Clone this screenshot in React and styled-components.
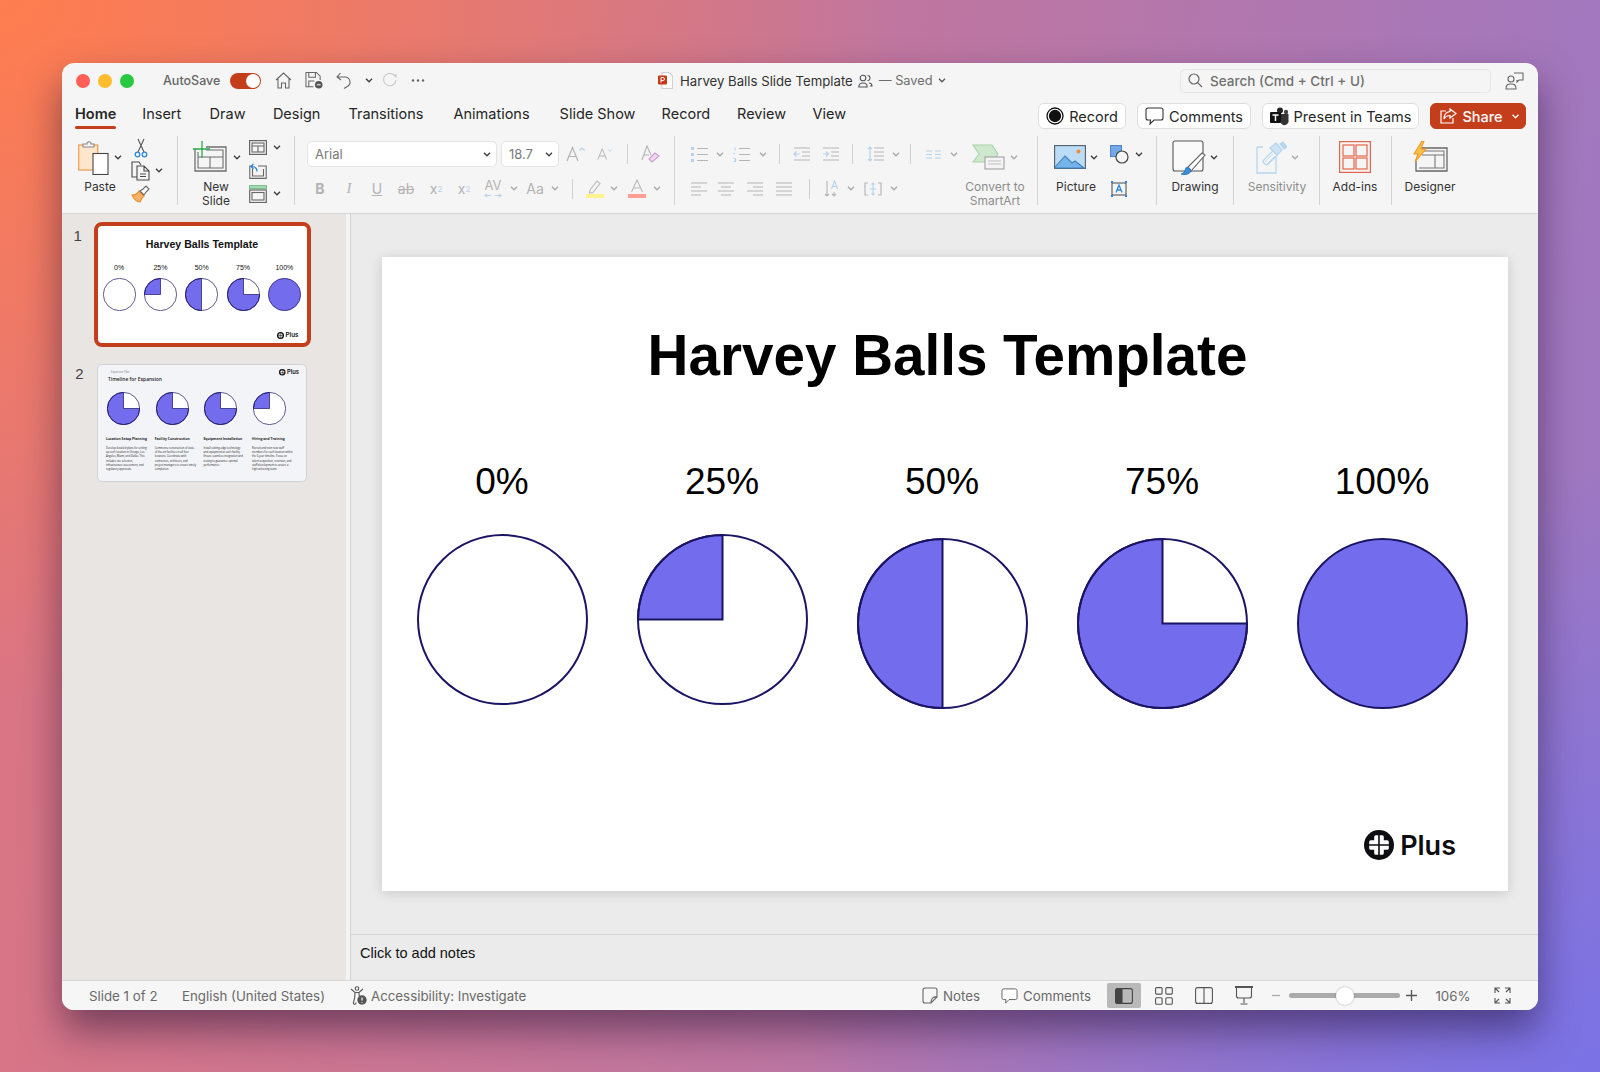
import React from 'react'
import styled, { createGlobalStyle } from 'styled-components'

const GlobalStyle = createGlobalStyle`
  html, body { margin: 0; padding: 0; }
  body { font-family: Inter, "Liberation Sans", sans-serif; color: #262626; }
`

const ORANGE = '#c43e1c'
const DISABLED = '#b3b3b3'
const TINT = '#b5d3ee'
const INK = '#4a4a4a'

const Page = styled.div`
  width: 1600px;
  height: 1072px;
  padding: 63px 62px;
  box-sizing: border-box;
  overflow: hidden;
  background:
    radial-gradient(ellipse 900px 700px at 0% 0%, #ff7d4f 0%, rgba(255, 125, 79, 0) 100%),
    radial-gradient(ellipse 800px 600px at 100% 100%, #7a72e6 0%, rgba(122, 114, 230, 0) 100%),
    linear-gradient(100deg, #de7580 0%, #c0769f 50%, #9a78c6 100%);
`
const Window = styled.div`
  width: 1476px;
  height: 947px;
  display: flex;
  flex-direction: column;
  background: #f5f5f5;
  border-radius: 12px;
  overflow: hidden;
  box-shadow: 0 20px 38px rgba(25, 10, 45, 0.5);
`
const TitleBar = styled.div`
  height: 35px;
  flex: none;
  display: flex;
  align-items: center;
  font-size: 13px;
`
const TitleLeft = styled.div`
  width: 596px;
  padding-left: 14px;
  box-sizing: border-box;
  display: flex;
  align-items: center;
`
const Light = styled.span`
  width: 14px;
  height: 14px;
  border-radius: 50%;
  margin-right: 8px;
  background: ${p => p.$c};
`
const AutoSave = styled.span`
  width: 67px;
  margin-left: 21px;
  font-size: 12.5px;
  font-weight: 500;
  color: #666;
`
const Toggle = styled.span`
  width: 31px;
  height: 16px;
  border-radius: 8px;
  background: ${ORANGE};
  position: relative;
  &::after {
    content: '';
    position: absolute;
    right: 1px;
    top: 1px;
    width: 14px;
    height: 14px;
    border-radius: 50%;
    background: #fff;
  }
`
const Cell = styled.span`
  width: ${p => p.$w}px;
  flex: none;
  display: flex;
  flex-direction: ${p => p.$col ? 'column' : 'row'};
  gap: ${p => p.$col ? 1 : 0}px;
  align-items: center;
  justify-content: center;
  color: ${p => p.$c || 'inherit'};
  font-family: ${p => p.$serif ? '"Liberation Serif", serif' : 'inherit'};
  font-style: ${p => p.$italic ? 'italic' : 'normal'};
  font-weight: ${p => p.$bold ? 700 : 400};
  font-size: ${p => p.$fs || 13}px;
  text-decoration: ${p => p.$deco || 'none'};
  white-space: nowrap;
  line-height: 1;
`
const DocTitle = styled.div`
  width: 522px;
  display: flex;
  align-items: center;
  font-size: 13.2px;
  color: #333;
  & > svg:first-child { margin-right: 7px; }
`
const Saved = styled.span`
  color: #6e6e6e;
  font-size: 12.8px;
  margin-right: 4px;
`
const SearchBox = styled.div`
  width: 311px;
  height: 24px;
  box-sizing: border-box;
  display: flex;
  align-items: center;
  gap: 7px;
  padding-left: 7px;
  border: 1px solid #e6e6e6;
  border-radius: 5px;
  color: #6f6f6f;
  font-weight: 500;
  font-size: 13.5px;
`
const TabsRow = styled.div`
  height: 38px;
  flex: none;
  display: flex;
  padding: 2px 12px 0 13px;
  box-sizing: border-box;
  justify-content: space-between;
`
const Tabs = styled.div`
  display: flex;
`
const TabSlot = styled.div`
  width: ${p => p.$w}px;
`
const Tab = styled.div`
  display: inline-block;
  height: 29px;
  line-height: 28px;
  font-size: 14.5px;
  font-weight: ${p => p.$on ? 600 : 400};
  color: #262626;
  position: relative;
  &::after {
    content: '';
    display: ${p => p.$on ? 'block' : 'none'};
    position: absolute;
    left: 0;
    right: 0;
    bottom: 0;
    height: 3px;
    border-radius: 2px;
    background: ${ORANGE};
  }
`
const Actions = styled.div`
  display: flex;
  gap: 11px;
  padding-top: 3px;
`
const ActionBtn = styled.button`
  height: 26px;
  width: ${p => p.$w}px;
  box-sizing: border-box;
  padding: 0 0 0 ${p => p.$primary ? 8 : 0}px;
  display: flex;
  align-items: center;
  justify-content: center;
  gap: 5px;
  font: 400 14.5px Inter, sans-serif;
  color: ${p => p.$primary ? '#fff' : '#262626'};
  font-weight: ${p => p.$primary ? 500 : 400};
  background: ${p => p.$primary ? ORANGE : '#fff'};
  border: 1px solid ${p => p.$primary ? ORANGE : '#dedede'};
  border-radius: 6px;
`
const Ribbon = styled.div`
  height: 78px;
  flex: none;
  display: flex;
  box-sizing: border-box;
  border-bottom: 1px solid #d6d6d6;
  font-size: 12px;
`
const Group = styled.div`
  width: ${p => p.$w}px;
  height: 69px;
  flex: none;
  box-sizing: border-box;
  display: flex;
  padding-left: ${p => p.$pl || 0}px;
  border-right: ${p => p.$last ? 'none' : '1px solid #d2d2d2'};
`
const BigTool = styled.div`
  width: ${p => p.$w}px;
  flex: none;
  display: flex;
  flex-direction: column;
  align-items: center;
  color: ${p => p.$off ? '#8d8d8d' : '#333'};
`
const BigIcon = styled.div`
  height: 44px;
  flex: none;
  padding-bottom: 2px;
  box-sizing: border-box;
  display: flex;
  align-items: center;
  gap: ${p => p.$gap ?? 4}px;
`
const BigLabel = styled.div`
  flex: none;
  text-align: center;
  line-height: 14px;
  white-space: nowrap;
`
const SmallCol = styled.div`
  display: flex;
  flex-direction: column;
  width: ${p => p.$w}px;
  flex: none;
`
const SmallRow = styled.div`
  height: 24.5px;
  display: flex;
  align-items: center;
  gap: ${p => p.$gap ?? 5}px;
  padding-left: ${p => p.$pl || 0}px;
`
const TwoRows = styled.div`
  display: flex;
  flex-direction: column;
`
const ToolRow = styled.div`
  height: ${p => p.$h}px;
  display: flex;
  align-items: center;
`
const Combo = styled.div`
  width: ${p => p.$w}px;
  height: 26px;
  margin-right: ${p => p.$mr || 0}px;
  box-sizing: border-box;
  display: flex;
  align-items: center;
  justify-content: space-between;
  padding: 0 5px 0 7px;
  background: #fff;
  border: 1px solid #e4e4e4;
  border-radius: 5px;
  font-size: 13px;
  color: #7a7a7a;
`
const Rule = styled.span`
  width: 1px;
  height: ${p => p.$h || 20}px;
  background: #cfcfcf;
`
const Body = styled.div`
  flex: 1;
  min-height: 0;
  display: flex;
`
const Sidebar = styled.div`
  width: 284px;
  flex: none;
  box-sizing: border-box;
  padding-top: 8px;
  background: #e8e5e3;
`
const SlideEntry = styled.div`
  display: flex;
  margin-bottom: 17px;
`
const SlideNo = styled.div`
  width: ${p => p.$w}px;
  flex: none;
  text-align: center;
  padding-top: ${p => p.$pt}px;
  font: 15px "Liberation Sans", sans-serif;
  color: #444;
`
const ThumbOne = styled.div`
  width: 217px;
  height: 125px;
  box-sizing: border-box;
  border: 4px solid ${ORANGE};
  border-radius: 8px;
  background: #fff;
  display: flex;
  flex-direction: column;
  font-family: "Liberation Sans", sans-serif;
  color: #111;
`
const MiniTitle = styled.div`
  text-align: center;
  font-weight: 700;
  font-size: 10.6px;
  line-height: 12px;
  margin-top: 12px;
`
const MiniBalls = styled.div`
  display: flex;
  margin-top: 14px;
  padding-left: 1px;
`
const MiniCol = styled.div`
  width: 41.3px;
  display: flex;
  flex-direction: column;
  align-items: center;
  gap: 6px;
  font-size: 7px;
  line-height: 8px;
`
const MiniLogoSlot = styled.div`
  margin: auto 8px 4px auto;
`
const ThumbTwo = styled.div`
  width: 210px;
  height: 118px;
  box-sizing: border-box;
  padding: 4px 7px 0 3px;
  background: #f3f4f8;
  border: 1px solid #d2d2d4;
  border-radius: 5px;
  font-family: "Open Sans", sans-serif;
  color: #1b1b1b;
`
const ThumbHead = styled.div`
  display: flex;
  justify-content: space-between;
  align-items: flex-start;
  padding-left: 7px;
  height: 23px;
`
const Eyebrow = styled.div`
  font-size: 2.6px;
  line-height: 5px;
  margin: 1px 0 0 3px;
  color: #777;
`
const ThumbHeading = styled.div`
  font-size: 4.9px;
  line-height: 7px;
  font-weight: 600;
  margin-top: 1px;
`
const ThumbCols = styled.div`
  display: flex;
`
const ThumbCol = styled.div`
  width: 48.7px;
  flex: none;
  box-sizing: border-box;
  padding: 0 2px 0 5px;
  & > svg { display: block; margin: 0 0 11px 1px; }
`
const ThumbSub = styled.div`
  font-size: 3.4px;
  line-height: 5px;
  font-weight: 700;
  white-space: nowrap;
  margin-bottom: 5px;
`
const ThumbCopy = styled.div`
  font-size: 2.6px;
  line-height: 4.2px;
  font-weight: 500;
  color: #222;
`
const Splitter = styled.div`
  width: 4px;
  flex: none;
  background: #f4f4f4;
  border-right: 1px solid #d2d2d2;
`
const MainCol = styled.div`
  flex: 1;
  min-width: 0;
  display: flex;
  flex-direction: column;
  background: #ebebeb;
`
const Stage = styled.div`
  height: 721px;
  flex: none;
  box-sizing: border-box;
  padding: 43px 0 0 31px;
  border-bottom: 1px solid #d6d6d6;
`
const Slide = styled.div`
  width: 1126px;
  height: 634px;
  display: flex;
  flex-direction: column;
  background: #fff;
  box-shadow: 0 2px 12px rgba(0, 0, 0, 0.14);
  font-family: "Liberation Sans", sans-serif;
  color: #000;
`
const SlideTitle = styled.h1`
  margin: 61px 0 0;
  padding-left: 5px;
  height: 75px;
  line-height: 75px;
  text-align: center;
  font-size: 56.6px;
  font-weight: 700;
`
const Balls = styled.div`
  display: flex;
  margin-top: 67px;
  padding-left: 10px;
`
const BallCol = styled.div`
  width: 220px;
  display: flex;
  flex-direction: column;
  align-items: center;
`
const BallLabel = styled.div`
  height: 44px;
  line-height: 44px;
  font-size: 37px;
`
const BallWrap = styled.div`
  margin-top: ${p => p.$top}px;
  line-height: 0;
`
const LogoSlot = styled.div`
  margin: auto 52px 31px auto;
`
const LogoWrap = styled.div`
  display: flex;
  align-items: center;
  gap: ${p => p.$size * 0.2}px;
  font: 600 ${p => p.$size * 0.9}px/1 Inter, sans-serif;
  color: #0d0d12;
`
const Notes = styled.div`
  flex: 1;
  padding: 10px 0 0 9px;
  font: 14.5px "Liberation Sans", sans-serif;
  color: #111;
`
const StatusBar = styled.div`
  height: 30px;
  flex: none;
  box-sizing: border-box;
  display: flex;
  align-items: center;
  padding: 0 18px 0 27px;
  background: #f6f6f6;
  border-top: 1px solid #d8d8d8;
  color: #6a6a6a;
`
const StatusText = styled.span`
  width: ${p => p.$w ? p.$w + 'px' : 'auto'};
  margin-left: ${p => p.$ml || 0}px;
  flex: none;
  font-size: 13.3px;
  white-space: nowrap;
`
const StatusRight = styled.div`
  margin-left: auto;
  display: flex;
  align-items: center;
`
const StatusItem = styled.div`
  width: ${p => p.$w}px;
  margin-right: ${p => p.$mr || 0}px;
  display: flex;
  align-items: center;
  justify-content: center;
  gap: 5px;
`
const ViewBtn = styled.div`
  width: 34px;
  height: 25px;
  display: flex;
  align-items: center;
  justify-content: center;
  background: #b9b9b9;
  border-radius: 2px;
`
const SliderTrack = styled.div`
  width: 111px;
  height: 5px;
  margin-left: 4px;
  border-radius: 3px;
  background: #ababab;
  position: relative;
`
const SliderThumb = styled.span`
  position: absolute;
  left: 47px;
  top: -6.5px;
  width: 18px;
  height: 18px;
  border-radius: 50%;
  background: #fff;
  box-shadow: 0 0 2px rgba(0, 0, 0, 0.35);
`

const Ico = ({ w, h, children, ...rest }) => (
  <svg width={w} height={h} viewBox={`0 0 ${w} ${h}`} fill="none" stroke={INK} strokeWidth="1.1" {...rest}>{children}</svg>
)

const Chev = ({ off, w = 8, c }) => (
  <svg width={w} height="5" viewBox="0 0 8 5" fill="none" stroke={c || (off ? '#a8a8a8' : '#3c3c3c')} strokeWidth="1.3"><path d="M1 .8l3 3 3-3" /></svg>
)

const Pie = ({ pct, d, sw = 2, line = '#1b1464' }) => {
  const r = d / 2 - sw / 2
  const c = d / 2
  const fill = '#736ded'
  let wedge = null
  if (pct === 25) wedge = <path d={`M${c} ${c}L${c - r} ${c}A${r} ${r} 0 0 1 ${c} ${c - r}Z`} fill={fill} />
  if (pct === 50) wedge = <path d={`M${c} ${c - r}A${r} ${r} 0 0 0 ${c} ${c + r}Z`} fill={fill} />
  if (pct === 75) wedge = <path d={`M${c} ${c}L${c} ${c - r}A${r} ${r} 0 1 0 ${c + r} ${c}Z`} fill={fill} />
  return (
    <svg width={d} height={d} viewBox={`0 0 ${d} ${d}`} fill="none" stroke={line} strokeWidth={sw}>
      <circle cx={c} cy={c} r={r} fill={pct === 100 ? fill : '#fff'} stroke="none" />
      {wedge && React.cloneElement(wedge, { stroke: line })}
      <circle cx={c} cy={c} r={r} />
    </svg>
  )
}

const quadrant = 'M14.2 5.2h-2.4a1.6 1.6 0 0 0-1.600 1.600v3.400H6.800a1.600 1.600 0 0 0-1.600 1.600v2.400h9z'
const PlusLogo = ({ size }) => (
  <LogoWrap $size={size}>
    <svg width={size} height={size} viewBox="0 0 30 30">
      <circle cx="15" cy="15" r="15" fill="#0d0d12" />
      {[0, 90, 180, 270].map(a => (
        <path key={a} d={quadrant} fill="#fff" transform={`rotate(${a} 15 15)`} />
      ))}
    </svg>
    Plus
  </LogoWrap>
)

const PasteIcon = () => (
  <Ico w={31} h={36}>
    <rect x=".7" y="6" width="19" height="25" fill="#fde6cc" stroke="#efa862" strokeWidth="1.4" />
    <path d="M5 8V5h4c0-3 4-3 4 0h3v3z" fill="#f3f3f3" stroke="#8a8a8a" />
    <rect x="15" y="14.500" width="15" height="21" fill="#fff" stroke="#444" />
  </Ico>
)
const ScissorsIcon = () => (
  <Ico w={14} h={20}>
    <path d="M4 1l6 13M10 1L4 14" stroke="#555" />
    <circle cx="3.500" cy="16.500" r="2.300" stroke="#2f86d6" strokeWidth="1.300" />
    <circle cx="10.500" cy="16.500" r="2.300" stroke="#2f86d6" strokeWidth="1.300" />
  </Ico>
)
const CopyIcon = () => (
  <Ico w={19} h={20}>
    <path d="M6 16H1V1h7l2 3" />
    <path d="M6 5h7l5 5v9H6zM13 5v5h5M9 13h6M9 15.500h6" fill="#f5f5f5" />
  </Ico>
)
const BrushIcon = () => (
  <Ico w={19} h={18}>
    <path d="M1 10c3 0 6-2 7-4l5 5c-2 1-3 4-4 6-3 0-6-3-8-7z" fill="#f7b267" stroke="#ee8a2a" />
    <path d="M9 6l3-2 3-3 3 3-3 3-2 3z" fill="#fff" stroke="#666" />
  </Ico>
)
const NewSlideIcon = () => (
  <Ico w={35} h={32}>
    <path d="M3 8v22h31V6H14" stroke="#6d6d6d" strokeWidth="1.300" />
    <path d="M6 11v16h25V9H14M6 16h25M18 16v11" stroke="#6d6d6d" />
    <path d="M10 0v17M1 8h17" stroke="#2aa84a" strokeWidth="1.300" />
  </Ico>
)
const LayoutIcon = () => (
  <Ico w={18} h={15} stroke="#666">
    <rect x=".6" y=".6" width="16.800" height="13.800" strokeWidth="1.200" />
    <rect x="3" y="3" width="12" height="9" />
    <path d="M3 6h12M9 6v6" />
  </Ico>
)
const ResetIcon = () => (
  <Ico w={18} h={16} stroke="#666">
    <path d="M4 3H.8v12.400h16.400V3H9M3.500 6v7h11V6" />
    <path d="M8 8.500C8 5 6 3.500 2.500 3.500M4.500 1L2 3.500 4.500 6" stroke="#2f86d6" strokeWidth="1.200" />
  </Ico>
)
const SectionIcon = () => (
  <Ico w={18} h={18} stroke="#666">
    <rect x=".5" y=".5" width="17" height="3" fill="#a9dbb5" stroke="#7cc08f" />
    <rect x=".7" y="5" width="16.600" height="12.500" strokeWidth="1.200" />
    <rect x="3" y="7.500" width="12" height="7.500" />
  </Ico>
)
const GrowIcon = ({ up }) => (
  <svg width={up ? 20 : 16} height="16" viewBox="0 0 20 16" fill="none" stroke={DISABLED} strokeWidth="1.200">
    <path d="M1 15L6.500 1.500 12 15M3 10.500h7" />
    <path d={up ? 'M13.500 4.500L16 2l2.500 2.500' : 'M13.500 2L16 4.500 18.500 2'} stroke={TINT} />
  </svg>
)
const ClearFmt = () => (
  <Ico w={19} h={18} stroke={DISABLED}>
    <path d="M1 15L6 1l4 9M3 10h5" />
    <path d="M11 17l-3-3 6-6 4 3z" fill="#f1d9f0" stroke="#cf9bd3" />
  </Ico>
)
const BulletIcon = ({ num }) => (
  <Ico w={17} h={15} stroke="#b5b5b5">
    <path d="M6 1.500h11M6 7.500h11M6 13.500h11" />
    {num ? (
      <path d="M2 .5v3M2 6.500h-1.500M.5 11.500h2v3h-2" stroke={TINT} />
    ) : (
      <path d="M0 1.500h3M0 7.500h3M0 13.500h3" stroke={TINT} strokeWidth="3" />
    )}
  </Ico>
)
const IndentIcon = ({ out }) => (
  <Ico w={17} h={14} stroke="#b5b5b5">
    <path d="M1 1h16M9 5h8M9 9h8M1 13h16" />
    <path d={out ? 'M6.500 7H1M3.500 4.500L1 7l2.500 2.500' : 'M1 7h5.500M4 4.500L6.500 7 4 9.500'} stroke={TINT} strokeWidth="1.200" />
  </Ico>
)
const LineSpacing = () => (
  <Ico w={17} h={16} stroke="#b5b5b5">
    <path d="M7 2h10M7 6h10M7 10h10M7 14h10" />
    <path d="M3 1v14M1 3l2-2 2 2M1 13l2 2 2-2" stroke={TINT} strokeWidth="1.200" />
  </Ico>
)
const ColsIcon = () => (
  <Ico w={15} h={9} stroke={TINT}>
    <path d="M0 1h6M9 1h6M0 4.500h6M9 4.500h6M0 8h6M9 8h6" />
  </Ico>
)
const AlignIcon = ({ kind }) => {
  const rows = {
    left: ['M1 1h16', 'M1 5h10', 'M1 9h16', 'M1 13h10'],
    center: ['M1 1h16', 'M4 5h10', 'M1 9h16', 'M4 13h10'],
    right: ['M1 1h16', 'M7 5h10', 'M1 9h16', 'M7 13h10'],
    just: ['M1 1h16', 'M1 5h16', 'M1 9h16', 'M1 13h16']
  }[kind]
  return <Ico w={18} h={14} stroke="#b5b5b5"><path d={rows.join('')} /></Ico>
}
const SmartArtIcon = () => (
  <Ico w={34} h={26}>
    <path d="M1 1h19l6 9-6 8H1l6-8z" fill="#cde8cd" stroke="#a6d3a8" />
    <rect x="13" y="13" width="19" height="12" fill="#f4f4f4" stroke="#a0a0a0" />
    <path d="M16 17h13M16 20h13" stroke="#bdbdbd" />
  </Ico>
)
const TextDir = () => (
  <Ico w={16} h={17} stroke="#b5b5b5">
    <path d="M3 1v15M1 14l2 2 2-2M10 12v4M8 14l2 2 2-2" />
    <path d="M7.500 9L10.500 1l3 8M8.500 6.500h4" stroke={TINT} />
  </Ico>
)
const AlignText = () => (
  <Ico w={18} h={14} stroke="#b5b5b5">
    <path d="M4 1H1v12h3M14 1h3v12h-3" />
    <path d="M6 7h6M9 1v12M7.500 2.500L9 1l1.500 1.500M7.500 11.500L9 13l1.500-1.500" stroke={TINT} />
  </Ico>
)
const KernArrows = () => (
  <Ico w={18} h={5} stroke={TINT}><path d="M1 2.500h6M3 .8L1 2.500l2 1.700M11 2.500h6M15 .8l2 1.700-2 1.700" /></Ico>
)
const Highlighter = () => (
  <Ico w={18} h={19} stroke="#b9b9b9">
    <path d="M4 11l7-9 3 2.500-7 9L3.500 14z" />
    <rect y="15" width="18" height="4" fill="#fdf28e" stroke="none" />
  </Ico>
)
const FontColor = () => (
  <Ico w={18} h={19} stroke="#b9b9b9">
    <path d="M3.500 13L9 1l5.500 12M5.500 9h7" />
    <rect y="15" width="18" height="4" fill="#ff9f94" stroke="none" />
  </Ico>
)
const PictureIcon = () => (
  <Ico w={32} h={24}>
    <rect x=".6" y=".6" width="30.800" height="22.800" fill="#bcdcf5" stroke="#4f5d6a" strokeWidth="1.100" />
    <path d="M1 22l10-11 7 7 3-2 9 7H1z" fill="#74b4ea" stroke="#3e82bd" />
    <circle cx="24.500" cy="6.500" r="2" fill="#f58b2e" stroke="none" />
  </Ico>
)
const ShapesIcon = () => (
  <Ico w={19} h={19}>
    <rect x=".5" y=".5" width="11" height="11" fill="#74a8e6" stroke="#4f86c6" />
    <circle cx="12" cy="12" r="6" fill="#f5f5f5" stroke="#444" strokeWidth="1.200" />
  </Ico>
)
const TextBoxIcon = () => (
  <Ico w={18} h={16} stroke="#2f86d6">
    <rect x="2" y="2" width="14" height="12" stroke="#555" />
    <path d="M6 11.500L9 4l3 7.500M7 9h4" strokeWidth="1.300" />
    <path d="M1 1h2M15 1h2M1 15h2M15 15h2" strokeWidth="2" />
  </Ico>
)
const DrawingIcon = () => (
  <Ico w={34} h={35}>
    <rect x="1" y="1" width="30" height="30" rx="2" fill="#fafafa" stroke="#555" />
    <path d="M15 28l15-15 3 2-14 16z" fill="#fff" stroke="#666" />
    <path d="M9 34c3 0 4-2 5-6 2-1 4 0 5 3-2 3-6 4-10 3z" fill="#3f8fd6" stroke="#2f7cc0" />
  </Ico>
)
const SensitivityIcon = () => (
  <Ico w={31} h={33} stroke="#b5d6ef" strokeWidth="1.300">
    <path d="M1 6h6M20 14v18H1V6" />
    <rect x="6" y="14" width="17" height="6" rx="3" transform="rotate(-45 14 17)" fill="#f5f5f5" />
    <path d="M9 21l8-8M11 23l8-8" strokeWidth=".8" />
    <path d="M14 7l6-5 6 7-5 5z" fill="#cfe3f4" />
    <path d="M24 3l3-2 4 5-3 2z" fill="#b5d6ef" />
  </Ico>
)
const AddinsIcon = () => (
  <Ico w={32} h={32} stroke="#e4664a" strokeWidth="1.200">
    <rect x=".6" y=".6" width="30.800" height="30.800" />
    <rect x="4" y="4" width="11" height="11" />
    <rect x="17" y="4" width="11" height="11" />
    <rect x="4" y="17" width="11" height="11" />
    <rect x="17" y="17" width="11" height="11" />
  </Ico>
)
const DesignerIcon = () => (
  <Ico w={35} h={32}>
    <path d="M6 7h28v23H3V20" stroke="#666" strokeWidth="1.300" />
    <path d="M9 10h22v17H6M9 14h22M22 14v13" stroke="#777" />
    <path d="M9 0L1 13h4l-3 8L13 8H8l3-8z" fill="#fbbf4a" stroke="#ed9b28" />
  </Ico>
)
const HomeIcon = () => (
  <Ico w={17} h={17} stroke="#666"><path d="M1 8L8.500 1 16 8M3 6.500V16h3.500v-5h4v5H14V6.500" /></Ico>
)
const SaveIcon = () => (
  <Ico w={19} h={19} stroke="#666">
    <path d="M9 16H1V1h11l4 4v4M4 1v5h7V1M4 16v-6h6" />
    <circle cx="14.500" cy="14" r="4" fill="#555" stroke="none" />
    <path d="M12.500 14h4" stroke="#fff" />
  </Ico>
)
const UndoIcon = () => (
  <Ico w={16} h={17} stroke="#666"><path d="M4.500 1L1 5l4 3M1 5h8a5 5 0 0 1 3 9l-4 2.500" /></Ico>
)
const RedoIcon = () => (
  <Ico w={16} h={15} stroke="#c9c9c9"><path d="M14 7a6.200 6.200 0 1 1-2-5l2 2V1" /></Ico>
)
const DotsIcon = () => (
  <Ico w={14} h={3} stroke="none"><circle cx="2" cy="1.500" r="1.200" fill="#666" /><circle cx="7" cy="1.500" r="1.200" fill="#666" /><circle cx="12" cy="1.500" r="1.200" fill="#666" /></Ico>
)
const PptIcon = () => (
  <Ico w={15} h={17}>
    <path d="M4 .5h7l3.500 3.500v12.500H4z" fill="#fff" stroke="#d0d0d0" />
    <rect y="3.500" width="9" height="9" rx="1" fill="#c8391a" stroke="none" />
    <path d="M3 10.500V5.500h2a1.500 1.500 0 0 1 0 3H3" stroke="#fff" strokeWidth="1" />
  </Ico>
)
const PeopleIcon = () => (
  <Ico w={15} h={14} stroke="#555"><circle cx="5" cy="4" r="2.800" /><path d="M.8 13c0-3 1.500-4 4.200-4s4.200 1 4.200 4zM9.500 1.500a2.500 2.500 0 1 1 0 5M11 9c2 0 3 1 3 3h-2" /></Ico>
)
const SearchIcon = () => (
  <Ico w={15} h={15} stroke="#666" strokeWidth="1.200"><circle cx="6" cy="6" r="5" /><path d="M9.700 9.700L14 14" /></Ico>
)
const CoauthorIcon = () => (
  <Ico w={19} h={18} stroke="#666"><circle cx="6" cy="7" r="3" /><path d="M1 17c0-4 1.500-5 5-5s5 1 5 5zM9 1h9v7h-4l-2 2V8" /></Ico>
)
const RecordIcon = () => (
  <Ico w={18} h={18} stroke="#111" strokeWidth="1.300"><circle cx="9" cy="9" r="8" fill="#fff" /><circle cx="9" cy="9" r="5.500" fill="#111" /></Ico>
)
const BubbleIcon = ({ w = 19, h = 18, c = '#333' }) => (
  <Ico w={w} h={h} viewBox="0 0 19 18" stroke={c}><path d="M3 1h13a2 2 0 0 1 2 2v8a2 2 0 0 1-2 2H9l-4 4 .5-4H3a2 2 0 0 1-2-2V3a2 2 0 0 1 2-2z" fill="#fff" /></Ico>
)
const TeamsIcon = () => (
  <Ico w={19} h={19} stroke="none">
    <circle cx="10" cy="3.500" r="3" fill="#222" />
    <circle cx="16" cy="5" r="2.200" fill="#444" />
    <path d="M9 7h9.500v6a4 4 0 0 1-8 2z" fill="#333" />
    <rect y="5" width="11" height="11" rx="1" fill="#111" />
    <path d="M2.500 8h6M5.500 8v6" stroke="#fff" strokeWidth="1.500" />
  </Ico>
)
const ShareIcon = () => (
  <Ico w={17} h={16} stroke="#fff" strokeWidth="1.200">
    <path d="M13 10v5H1V3h5" />
    <path d="M10 1l6 4.500L10 10V7.500C7 7.500 5 9 4 11c0-4 2-7 6-7.500z" />
  </Ico>
)
const AccessIcon = () => (
  <Ico w={17} h={19} stroke="#555">
    <circle cx="7" cy="2.500" r="1.800" />
    <path d="M1 3l4 3.500h4L13 3M5 7c0 4 0 6-1.500 9.500-.8 2 2.500 2.500 2.500 0M9 7c0 2 .2 3 .5 4" />
    <circle cx="12" cy="14" r="4.700" fill="#555" stroke="none" />
    <path d="M12 11.500v3M12 16v.8" stroke="#fff" strokeWidth="1.200" />
  </Ico>
)
const NoteIcon = () => (
  <Ico w={16} h={17} stroke="#666"><path d="M3 1h10a2 2 0 0 1 2 2v7l-6 6H3a2 2 0 0 1-2-2V3a2 2 0 0 1 2-2zM15 10c-4-.5-6 1.500-6 6" /></Ico>
)
const NormalIcon = () => (
  <Ico w={18} h={16} stroke="#444" strokeWidth="1.100"><rect x=".6" y=".6" width="16.800" height="14.800" rx="2" /><path d="M3 .6h4v14.800H3a2.400 2.400 0 0 1-2.400-2.400V3A2.400 2.400 0 0 1 3 .6z" fill="#444" /></Ico>
)
const GridIcon = () => (
  <Ico w={18} h={18} stroke="#555">
    <rect x=".6" y=".6" width="6.500" height="6.500" rx="1" /><rect x="10.800" y=".6" width="6.500" height="6.500" rx="1" />
    <rect x=".6" y="10.800" width="6.500" height="6.500" rx="1" /><rect x="10.800" y="10.800" width="6.500" height="6.500" rx="1" />
  </Ico>
)
const ReadIcon = () => (
  <Ico w={18} h={17} stroke="#555"><rect x=".6" y=".6" width="16.800" height="15.800" rx="2" /><path d="M9 .6v15.800" /></Ico>
)
const ShowIcon = () => (
  <Ico w={18} h={19} stroke="#555"><path d="M0 1h18" strokeWidth="2" /><path d="M1.500 1v9a2 2 0 0 0 2 2h11a2 2 0 0 0 2-2V1M9 12v5M5.500 18h7" /></Ico>
)
const FullIcon = () => (
  <Ico w={17} h={17} stroke="#555"><path d="M1 6V1h5M1 1l4 4M11 1h5v5M16 1l-4 4M1 11v5h5M1 16l4-4M16 11v5h-5M16 16l-4-4" /></Ico>
)
const MinMax = ({ plus, c }) => (
  <Ico w={11} h={11} stroke={c} strokeWidth="1.300"><path d={plus ? 'M0 5.500h11M5.500 0v11' : 'M1 5.500h8'} /></Ico>
)

const tabs = [
  ['Home', 67.3], ['Insert', 67.3], ['Draw', 63.3], ['Design', 75.5], ['Transitions', 105.1],
  ['Animations', 106.1], ['Slide Show', 102], ['Record', 75.5], ['Review', 75.5], ['View', 40]
]
const slideBalls = [
  { pct: 0, top: 30 },
  { pct: 25, top: 30 },
  { pct: 50, top: 34 },
  { pct: 75, top: 34 },
  { pct: 100, top: 34 }
]
const planCols = [
  { pct: 75, head: 'Location Setup Planning', copy: 'Develop detailed plans for setting up each location in Chicago, Los Angeles, Miami, and Dallas. This includes site selection, infrastructure assessment, and regulatory approvals.' },
  { pct: 75, head: 'Facility Construction', copy: 'Commence construction of state-of-the-art facilities in all four locations. Coordinate with contractors, architects, and project managers to ensure timely completion.' },
  { pct: 75, head: 'Equipment Installation', copy: 'Install cutting-edge technology and equipment at each facility. Ensure seamless integration and testing to guarantee optimal performance.' },
  { pct: 25, head: 'Hiring and Training', copy: 'Recruit and train new staff members for each location within the 6-year timeline. Focus on talent acquisition, retention, and staff development to ensure a high-achieving team.' }
]

export default function App() {
  return (
    <Page>
      <GlobalStyle />
      <Window>
        <TitleBar>
          <TitleLeft>
            <Light $c="#ff5f57" />
            <Light $c="#febc2e" />
            <Light $c="#28c840" />
            <AutoSave>AutoSave</AutoSave>
            <Toggle />
            <Cell $w={44}><HomeIcon /></Cell>
            <Cell $w={18}><SaveIcon /></Cell>
            <Cell $w={42}><UndoIcon /></Cell>
            <Cell $w={8}><Chev /></Cell>
            <Cell $w={34}><RedoIcon /></Cell>
            <Cell $w={22}><DotsIcon /></Cell>
          </TitleLeft>
          <DocTitle>
            <PptIcon />
            Harvey Balls Slide Template
            <Cell $w={26}><PeopleIcon /></Cell>
            <Saved>— Saved</Saved>
            <Chev c="#555" w={10} />
          </DocTitle>
          <SearchBox><SearchIcon />Search (Cmd + Ctrl + U)</SearchBox>
          <Cell $w={47}><CoauthorIcon /></Cell>
        </TitleBar>

        <TabsRow>
          <Tabs>
            {tabs.map(([t, w]) => (
              <TabSlot key={t} $w={w}><Tab $on={t === 'Home'}>{t}</Tab></TabSlot>
            ))}
          </Tabs>
          <Actions>
            <ActionBtn $w={88}><RecordIcon />Record</ActionBtn>
            <ActionBtn $w={114}><BubbleIcon />Comments</ActionBtn>
            <ActionBtn $w={157}><TeamsIcon />Present in Teams</ActionBtn>
            <ActionBtn $w={96} $primary><ShareIcon />Share<Cell $w={16}><Chev c="#fff" w={9} /></Cell></ActionBtn>
          </Actions>
        </TabsRow>

        <Ribbon>
          <Group $w={116} $pl={14}>
            <BigTool $w={48}>
              <BigIcon $gap={5}><PasteIcon /><Chev /></BigIcon>
              <BigLabel>Paste</BigLabel>
            </BigTool>
            <SmallCol $w={50}>
              <SmallRow $pl={10}><ScissorsIcon /></SmallRow>
              <SmallRow $pl={7}><CopyIcon /><Chev /></SmallRow>
              <SmallRow $pl={7}><BrushIcon /></SmallRow>
            </SmallCol>
          </Group>
          <Group $w={117} $pl={11}>
            <BigTool $w={54}>
              <BigIcon $gap={6}><NewSlideIcon /><Chev /></BigIcon>
              <BigLabel>New<br />Slide</BigLabel>
            </BigTool>
            <SmallCol $w={50}>
              <SmallRow $pl={6} $gap={6}><LayoutIcon /><Chev /></SmallRow>
              <SmallRow $pl={6}><ResetIcon /></SmallRow>
              <SmallRow $pl={6} $gap={6}><SectionIcon /><Chev /></SmallRow>
            </SmallCol>
          </Group>
          <Group $w={380} $pl={12}>
            <TwoRows>
              <ToolRow $h={38}>
                <Combo $w={190} $mr={4}>Arial<Chev /></Combo>
                <Combo $w={58}>18.7<Chev /></Combo>
                <Cell $w={34}><GrowIcon up /></Cell>
                <Cell $w={24}><GrowIcon /></Cell>
                <Cell $w={20}><Rule /></Cell>
                <Cell $w={26}><ClearFmt /></Cell>
              </ToolRow>
              <ToolRow $h={33}>
                <Cell $w={26} $bold $fs={14} $c={DISABLED}>B</Cell>
                <Cell $w={32} $serif $italic $fs={15} $c={DISABLED}>I</Cell>
                <Cell $w={24} $fs={14} $deco="underline" $c={DISABLED}>U</Cell>
                <Cell $w={34} $fs={14} $deco="line-through" $c={DISABLED}>ab</Cell>
                <Cell $w={26} $fs={14} $c={DISABLED}>x<sup style={{ fontSize: 8, color: TINT }}>2</sup></Cell>
                <Cell $w={30} $fs={14} $c={DISABLED}>x<sub style={{ fontSize: 8, color: TINT }}>2</sub></Cell>
                <Cell $w={28} $fs={13} $c={DISABLED} $col>AV<KernArrows /></Cell>
                <Cell $w={14}><Chev off /></Cell>
                <Cell $w={28} $fs={14} $c={DISABLED}>Aa</Cell>
                <Cell $w={12}><Chev off /></Cell>
                <Cell $w={22}><Rule /></Cell>
                <Cell $w={24}><Highlighter /></Cell>
                <Cell $w={14}><Chev off /></Cell>
                <Cell $w={32}><FontColor /></Cell>
                <Cell $w={8}><Chev off /></Cell>
              </ToolRow>
            </TwoRows>
          </Group>
          <Group $w={363} $pl={12}>
            <TwoRows>
              <ToolRow $h={38}>
                <Cell $w={24}><BulletIcon /></Cell>
                <Cell $w={18}><Chev off /></Cell>
                <Cell $w={25}><BulletIcon num /></Cell>
                <Cell $w={18}><Chev off /></Cell>
                <Cell $w={14}><Rule /></Cell>
                <Cell $w={30}><IndentIcon out /></Cell>
                <Cell $w={28}><IndentIcon /></Cell>
                <Cell $w={16}><Rule /></Cell>
                <Cell $w={30}><LineSpacing /></Cell>
                <Cell $w={12}><Chev off /></Cell>
                <Cell $w={16}><Rule /></Cell>
                <Cell $w={31}><ColsIcon /></Cell>
                <Cell $w={10}><Chev off /></Cell>
              </ToolRow>
              <ToolRow $h={33}>
                <Cell $w={24}><AlignIcon kind="left" /></Cell>
                <Cell $w={29}><AlignIcon kind="center" /></Cell>
                <Cell $w={29}><AlignIcon kind="right" /></Cell>
                <Cell $w={29}><AlignIcon kind="just" /></Cell>
                <Cell $w={22}><Rule /></Cell>
                <Cell $w={24}><TextDir /></Cell>
                <Cell $w={14}><Chev off /></Cell>
                <Cell $w={30}><AlignText /></Cell>
                <Cell $w={12}><Chev off /></Cell>
              </ToolRow>
            </TwoRows>
            <BigTool $w={72} $off>
              <BigIcon><SmartArtIcon /><Chev off /></BigIcon>
              <BigLabel>Convert to<br />SmartArt</BigLabel>
            </BigTool>
          </Group>
          <Group $w={119} $pl={11}>
            <BigTool $w={54}>
              <BigIcon><PictureIcon /><Chev /></BigIcon>
              <BigLabel>Picture</BigLabel>
            </BigTool>
            <SmallCol $w={44}>
              <ToolRow $h={38}><Cell $w={32}><ShapesIcon /></Cell><Chev /></ToolRow>
              <ToolRow $h={33}><Cell $w={32}><TextBoxIcon /></Cell></ToolRow>
            </SmallCol>
          </Group>
          <Group $w={77} $pl={13}>
            <BigTool $w={50}>
              <BigIcon><DrawingIcon /><Chev /></BigIcon>
              <BigLabel>Drawing</BigLabel>
            </BigTool>
          </Group>
          <Group $w={86} $pl={12}>
            <BigTool $w={62} $off>
              <BigIcon><SensitivityIcon /><Chev off /></BigIcon>
              <BigLabel>Sensitivity</BigLabel>
            </BigTool>
          </Group>
          <Group $w={72} $pl={11}>
            <BigTool $w={48}>
              <BigIcon><AddinsIcon /></BigIcon>
              <BigLabel>Add-ins</BigLabel>
            </BigTool>
          </Group>
          <Group $w={100} $pl={12} $last>
            <BigTool $w={52}>
              <BigIcon><DesignerIcon /></BigIcon>
              <BigLabel>Designer</BigLabel>
            </BigTool>
          </Group>
        </Ribbon>

        <Body>
          <Sidebar>
            <SlideEntry>
              <SlideNo $w={31.5} $pt={5}>1</SlideNo>
              <ThumbOne>
                <MiniTitle>Harvey Balls Template</MiniTitle>
                <MiniBalls>
                  {slideBalls.map(b => (
                    <MiniCol key={b.pct}>
                      {b.pct}%
                      <Pie pct={b.pct} d={33} sw={0.7} />
                    </MiniCol>
                  ))}
                </MiniBalls>
                <MiniLogoSlot><PlusLogo size={7} /></MiniLogoSlot>
              </ThumbOne>
            </SlideEntry>
            <SlideEntry>
              <SlideNo $w={35} $pt={1}>2</SlideNo>
              <ThumbTwo>
                <ThumbHead>
                  <div>
                    <Eyebrow>Expansion Plan</Eyebrow>
                    <ThumbHeading>Timeline for Expansion</ThumbHeading>
                  </div>
                  <PlusLogo size={6.5} />
                </ThumbHead>
                <ThumbCols>
                  {planCols.map(c => (
                    <ThumbCol key={c.head}>
                      <Pie pct={c.pct} d={33} sw={0.7} />
                      <ThumbSub>{c.head}</ThumbSub>
                      <ThumbCopy>{c.copy}</ThumbCopy>
                    </ThumbCol>
                  ))}
                </ThumbCols>
              </ThumbTwo>
            </SlideEntry>
          </Sidebar>
          <Splitter />
          <MainCol>
            <Stage>
              <Slide>
                <SlideTitle>Harvey Balls Template</SlideTitle>
                <Balls>
                  {slideBalls.map(b => (
                    <BallCol key={b.pct}>
                      <BallLabel>{b.pct}%</BallLabel>
                      <BallWrap $top={b.top}><Pie pct={b.pct} d={171} /></BallWrap>
                    </BallCol>
                  ))}
                </Balls>
                <LogoSlot><PlusLogo size={30} /></LogoSlot>
              </Slide>
            </Stage>
            <Notes>Click to add notes</Notes>
          </MainCol>
        </Body>

        <StatusBar>
          <StatusText $w={93}>Slide 1 of 2</StatusText>
          <StatusText $w={168}>English (United States)</StatusText>
          <AccessIcon />
          <StatusText $ml={4}>Accessibility: Investigate</StatusText>
          <StatusRight>
            <StatusItem $w={62} $mr={19}><NoteIcon /><StatusText>Notes</StatusText></StatusItem>
            <StatusItem $w={90} $mr={16}><BubbleIcon w={17} h={16} c="#666" /><StatusText>Comments</StatusText></StatusItem>
            <ViewBtn><NormalIcon /></ViewBtn>
            <StatusItem $w={46}><GridIcon /></StatusItem>
            <StatusItem $w={34}><ReadIcon /></StatusItem>
            <StatusItem $w={46}><ShowIcon /></StatusItem>
            <StatusItem $w={18}><MinMax c="#aaa" /></StatusItem>
            <SliderTrack><SliderThumb /></SliderTrack>
            <StatusItem $w={22}><MinMax plus c="#555" /></StatusItem>
            <StatusItem $w={62}><StatusText>106%</StatusText></StatusItem>
            <StatusItem $w={36}><FullIcon /></StatusItem>
          </StatusRight>
        </StatusBar>
      </Window>
    </Page>
  )
}
